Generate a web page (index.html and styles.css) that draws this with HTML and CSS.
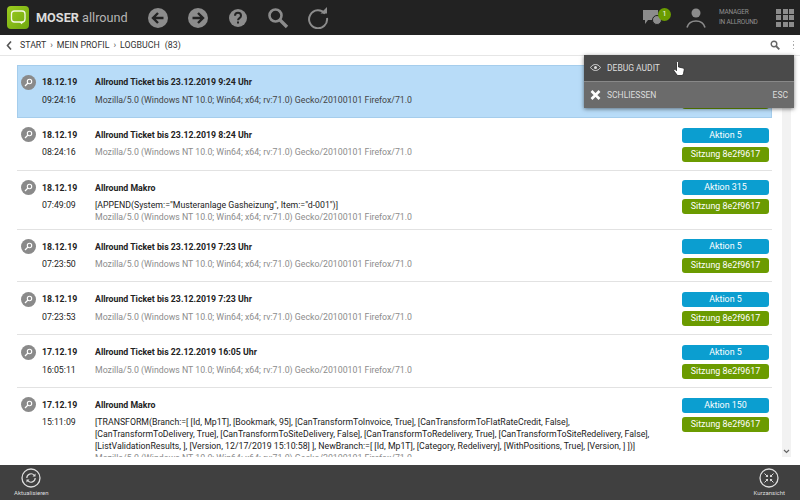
FILE: index.html
```html
<!DOCTYPE html>
<html lang="de">
<head>
<meta charset="utf-8">
<title>Logbuch</title>
<link rel="stylesheet" href="styles.css">
</head>
<body>
<div class="app">
  <header class="topbar">
    <div class="logo"><svg width="22" height="22" viewBox="0 0 22 22"><rect x="4.500" y="5" width="13.500" height="11" rx="3" fill="none" stroke="#f3f8e4" stroke-width="1.300"/><path d="M12.500 16h4l-2 2.200z" fill="#f3f8e4"/></svg></div>
    <div class="brand"><b>MOSER</b> allround</div>
    <nav class="tools">
      <svg width="22" height="22" viewBox="-1 -1 22 22"><circle cx="10" cy="10" r="10" fill="#8c8c8c"/><path d="M15.500 10H5.500M10 5l-5 5 5 5" fill="none" stroke="#222" stroke-width="2.400"/></svg>
      <svg width="22" height="22" viewBox="-1 -1 22 22"><circle cx="10" cy="10" r="10" fill="#8c8c8c"/><path d="M4.500 10h10M10 5l5 5-5 5" fill="none" stroke="#222" stroke-width="2.400"/></svg>
      <svg width="22" height="22" viewBox="-1 -1 22 22"><circle cx="10" cy="10" r="9" fill="#8c8c8c"/><path d="M7 7.800c0-4 6-4 6 0 0 2.400-3 2.200-3 4.400" fill="none" stroke="#222" stroke-width="2"/><rect x="9" y="13.500" width="2" height="2" fill="#222"/></svg>
      <svg width="22" height="22" viewBox="0 0 22 22"><circle cx="8.500" cy="8.500" r="6" fill="none" stroke="#8c8c8c" stroke-width="2.600"/><path d="M13 13l7 7" stroke="#8c8c8c" stroke-width="3.400"/></svg>
      <svg width="22" height="22" viewBox="0 0 22 22"><path d="M18 6.500A9 9 0 1 0 20 11" fill="none" stroke="#8c8c8c" stroke-width="2"/><path d="M13.500 6.500h6.500V0z" fill="#8c8c8c"/></svg>
    </nav>
    <div class="session">
      <div class="chat">
        <svg width="20" height="17" viewBox="0 0 20 17"><path d="M0 1h15v10H5l-3 4v-4H0z" fill="#8c8c8c"/><circle cx="14" cy="11" r="4.500" fill="#8c8c8c" stroke="#222"/></svg>
        <span class="badge">1</span>
      </div>
      <svg class="user" width="20" height="22" viewBox="0 0 20 22"><circle cx="10" cy="6" r="4.500" fill="#8c8c8c"/><path d="M1 20.500c1.500-5 5-6.500 9-6.500s7.500 1.500 9 6.500" fill="none" stroke="#8c8c8c" stroke-width="1.600"/></svg>
      <div class="who"><span>MANAGER</span><span>IN ALLROUND</span></div>
      <div class="grid-icon"><i></i><i></i><i></i><i></i><i></i><i></i><i></i><i></i><i></i></div>
    </div>
  </header>

  <div class="crumbs">
    <svg width="6" height="9" viewBox="0 0 6 9"><path d="M5 .5L1.500 4.500 5 8.500" fill="none" stroke="#555" stroke-width="1.600"/></svg>
    <span>START</span><span class="sep">›</span><span>MEIN PROFIL</span><span class="sep">›</span><span>LOGBUCH</span><span class="count">(83)</span>
    <span class="spacer"></span>
    <svg width="10" height="10" viewBox="0 0 10 10"><circle cx="4" cy="4" r="2.800" fill="none" stroke="#666" stroke-width="1.400"/><path d="M6 6l3.300 3.300" stroke="#666" stroke-width="1.800"/></svg>
    <span class="dots"><i></i><i></i><i></i></span>
  </div>

  <main class="content">
    <div class="list">
      <article class="row selected">
        <span class="mark"><svg width="9" height="9" viewBox="0 0 9 9"><circle cx="5.500" cy="3.500" r="2.200" fill="none" stroke="#fff" stroke-width="1.100"/><path d="M4 5L1 8" stroke="#fff" stroke-width="1.300"/></svg></span>
        <div class="when"><b>18.12.19</b><span>09:24:16</span></div>
        <div class="what"><b>Allround Ticket bis 23.12.2019 9:24 Uhr</b><p class="agent dark">Mozilla/5.0 (Windows NT 10.0; Win64; x64; rv:71.0) Gecko/20100101 Firefox/71.0</p></div>
        <div class="tags"><span class="tag blue">Aktion 5</span><span class="tag green">Sitzung 8e2f9617</span></div>
      </article>
      <article class="row">
        <span class="mark"><svg width="9" height="9" viewBox="0 0 9 9"><circle cx="5.500" cy="3.500" r="2.200" fill="none" stroke="#fff" stroke-width="1.100"/><path d="M4 5L1 8" stroke="#fff" stroke-width="1.300"/></svg></span>
        <div class="when"><b>18.12.19</b><span>08:24:16</span></div>
        <div class="what"><b>Allround Ticket bis 23.12.2019 8:24 Uhr</b><p class="agent">Mozilla/5.0 (Windows NT 10.0; Win64; x64; rv:71.0) Gecko/20100101 Firefox/71.0</p></div>
        <div class="tags"><span class="tag blue">Aktion 5</span><span class="tag green">Sitzung 8e2f9617</span></div>
      </article>
      <article class="row tall">
        <span class="mark"><svg width="9" height="9" viewBox="0 0 9 9"><circle cx="5.500" cy="3.500" r="2.200" fill="none" stroke="#fff" stroke-width="1.100"/><path d="M4 5L1 8" stroke="#fff" stroke-width="1.300"/></svg></span>
        <div class="when"><b>18.12.19</b><span>07:49:09</span></div>
        <div class="what"><b>Allround Makro</b><p>[APPEND(System:="Musteranlage Gasheizung", Item:="d-001")]</p><p class="agent">Mozilla/5.0 (Windows NT 10.0; Win64; x64; rv:71.0) Gecko/20100101 Firefox/71.0</p></div>
        <div class="tags"><span class="tag blue">Aktion 315</span><span class="tag green">Sitzung 8e2f9617</span></div>
      </article>
      <article class="row">
        <span class="mark"><svg width="9" height="9" viewBox="0 0 9 9"><circle cx="5.500" cy="3.500" r="2.200" fill="none" stroke="#fff" stroke-width="1.100"/><path d="M4 5L1 8" stroke="#fff" stroke-width="1.300"/></svg></span>
        <div class="when"><b>18.12.19</b><span>07:23:50</span></div>
        <div class="what"><b>Allround Ticket bis 23.12.2019 7:23 Uhr</b><p class="agent">Mozilla/5.0 (Windows NT 10.0; Win64; x64; rv:71.0) Gecko/20100101 Firefox/71.0</p></div>
        <div class="tags"><span class="tag blue">Aktion 5</span><span class="tag green">Sitzung 8e2f9617</span></div>
      </article>
      <article class="row">
        <span class="mark"><svg width="9" height="9" viewBox="0 0 9 9"><circle cx="5.500" cy="3.500" r="2.200" fill="none" stroke="#fff" stroke-width="1.100"/><path d="M4 5L1 8" stroke="#fff" stroke-width="1.300"/></svg></span>
        <div class="when"><b>18.12.19</b><span>07:23:53</span></div>
        <div class="what"><b>Allround Ticket bis 23.12.2019 7:23 Uhr</b><p class="agent">Mozilla/5.0 (Windows NT 10.0; Win64; x64; rv:71.0) Gecko/20100101 Firefox/71.0</p></div>
        <div class="tags"><span class="tag blue">Aktion 5</span><span class="tag green">Sitzung 8e2f9617</span></div>
      </article>
      <article class="row">
        <span class="mark"><svg width="9" height="9" viewBox="0 0 9 9"><circle cx="5.500" cy="3.500" r="2.200" fill="none" stroke="#fff" stroke-width="1.100"/><path d="M4 5L1 8" stroke="#fff" stroke-width="1.300"/></svg></span>
        <div class="when"><b>17.12.19</b><span>16:05:11</span></div>
        <div class="what"><b>Allround Ticket bis 22.12.2019 16:05 Uhr</b><p class="agent">Mozilla/5.0 (Windows NT 10.0; Win64; x64; rv:71.0) Gecko/20100101 Firefox/71.0</p></div>
        <div class="tags"><span class="tag blue">Aktion 5</span><span class="tag green">Sitzung 8e2f9617</span></div>
      </article>
      <article class="row last">
        <span class="mark"><svg width="9" height="9" viewBox="0 0 9 9"><circle cx="5.500" cy="3.500" r="2.200" fill="none" stroke="#fff" stroke-width="1.100"/><path d="M4 5L1 8" stroke="#fff" stroke-width="1.300"/></svg></span>
        <div class="when"><b>17.12.19</b><span>15:11:09</span></div>
        <div class="what"><b>Allround Makro</b><p>[TRANSFORM(Branch:=[ [Id, Mp1T], [Bookmark, 95], [CanTransformToInvoice, True], [CanTransformToFlatRateCredit, False],<br>[CanTransformToDelivery, True], [CanTransformToSiteDelivery, False], [CanTransformToRedelivery, True], [CanTransformToSiteRedelivery, False],<br>[ListValidationResults, ], [Version, 12/17/2019 15:10:58] ], NewBranch:=[ [Id, Mp1T], [Category, Redelivery], [WithPositions, True], [Version, ] ])]</p><p class="agent">Mozilla/5.0 (Windows NT 10.0; Win64; x64; rv:71.0) Gecko/20100101 Firefox/71.0</p></div>
        <div class="tags"><span class="tag blue">Aktion 150</span><span class="tag green">Sitzung 8e2f9617</span></div>
      </article>
    </div>
    <div class="scrolltrack">
      <svg width="7" height="5" viewBox="0 0 7 5"><path d="M1 1l2.500 2.500L6 1" fill="none" stroke="#666" stroke-width="1.200"/></svg>
    </div>
  </main>

  <footer class="bottombar">
    <div class="action">
      <svg width="20" height="20" viewBox="0 0 20 20"><circle cx="10" cy="10" r="9" fill="none" stroke="#ddd" stroke-width="1.300"/><path d="M5.800 10a4.200 4.200 0 0 1 7.400-2.700M14.200 10a4.200 4.200 0 0 1-7.400 2.700" fill="none" stroke="#ddd" stroke-width="1.200"/><path d="M14.500 5.500v3h-3zM5.500 14.500v-3h3z" fill="#ddd"/></svg>
      <span>Aktualisieren</span>
    </div>
    <div class="action">
      <svg width="20" height="20" viewBox="0 0 20 20"><circle cx="10" cy="10" r="9" fill="none" stroke="#ddd" stroke-width="1.300"/><path d="M5.500 5.500L8.500 8.500M14.500 5.500L11.500 8.500M5.500 14.500L8.500 11.500M14.500 14.500L11.500 11.500" stroke="#ddd" stroke-width="1"/><path d="M9 9H6.500L9 6.500zM11 9h2.500L11 6.500zM9 11H6.500L9 13.500zM11 11h2.500L11 13.500z" fill="#ddd"/></svg>
      <span>Kurzansicht</span>
    </div>
  </footer>

  <div class="menu">
    <div class="menu-item first">
      <svg width="11" height="7" viewBox="0 0 11 7"><path d="M.5 3.500C2 1.300 3.700.5 5.500.5s3.500.8 5 3c-1.500 2.200-3.200 3-5 3s-3.500-.8-5-3z" fill="none" stroke="#ddd" stroke-width=".9"/><circle cx="5.500" cy="3.500" r="1.500" fill="#ddd"/></svg>
      <span>DEBUG AUDIT</span>
      <svg class="cursor" width="12" height="15" viewBox="0 0 12 15"><path d="M3.500 1.500c0-1.300 2-1.300 2 0V6l4.500 1c1 .3 1.300 1 1.200 2l-.7 3.500-1 2H4.500L1 10c-.8-1 .5-2.300 1.500-1.300l1 1z" fill="#fff" stroke="#222" stroke-width=".8"/></svg>
    </div>
    <div class="menu-item second">
      <svg width="10" height="10" viewBox="0 0 10 10"><path d="M1 1l8 8M9 1l-8 8" stroke="#fff" stroke-width="2.600"/></svg>
      <span>SCHLIESSEN</span>
      <span class="esc">ESC</span>
    </div>
  </div>
</div>
</body>
</html>
```

FILE: styles.css
```css
* { box-sizing: border-box; }
html, body { margin: 0; padding: 0; }
body { font-family: Roboto, "Liberation Sans", sans-serif; color: #222; background: #fff; }
.app { position: relative; width: 800px; height: 500px; display: flex; flex-direction: column; overflow: hidden; }

.topbar { height: 35px; flex: none; background: #222; display: flex; align-items: center; padding-left: 7px; }
.logo { width: 22px; height: 23px; border-radius: 4px; background: linear-gradient(135deg, #9ccc1f, #6fa80f); }
.brand { margin-left: 7px; font-size: 12.700px; color: #b5b5b5; width: 110.500px; white-space: nowrap; }
.brand b { color: #dcdcdc; }
.tools { display: flex; align-items: center; gap: 18px; }
.session { margin-left: auto; display: flex; align-items: center; padding-right: 6px; }
.chat { position: relative; width: 28px; height: 18px; }
.badge { position: absolute; left: 15px; top: -1px; width: 13px; height: 13px; border-radius: 50%; background: #6a9c00; color: #fff; font-size: 7px; text-align: center; line-height: 13px; }
.user { margin-left: 15px; }
.who { margin-left: 13px; width: 57px; display: flex; flex-direction: column; gap: 3px; font-size: 6.500px; letter-spacing: -.2px; line-height: 7px; color: #8f8f8f; }
.grid-icon { width: 18px; height: 18px; display: grid; grid-template-columns: repeat(3, 5px); grid-auto-rows: 5px; gap: 1.500px; }
.grid-icon i { background: #8c8c8c; }

.crumbs { height: 20px; flex: none; display: flex; align-items: center; padding: 0 6px; background: #fff; font-size: 8.800px; color: #333; }
.crumbs svg:first-child { margin-right: 8px; }
.sep { margin: 0 4px; color: #555; }
.count { margin-left: 5px; }
.spacer { flex: 1; }
.dots { margin-left: 13px; display: flex; flex-direction: column; gap: 2px; }
.dots i { width: 1.500px; height: 1.500px; background: #aaa; }

.content { position: relative; flex: 1; min-height: 0; overflow: hidden; background: #fff; border-top: 1px solid #e6e6e6; padding: 9px 0 8px 17px; display: flex; }
.list { width: 755px; flex: none; overflow: hidden; }
.row { display: flex; padding: 12px 3px 0 4px; height: 52.750px; border-bottom: 1px solid #e2e2e2; font-size: 8.750px; }
.row.tall { height: 59px; }
.row.last { height: auto; border-bottom: 0; }
.row.selected { background: #b8dcf8; border: 1px solid #a5cdec; padding: 11px 2px 0 3px; }
.mark { width: 15px; height: 15px; border-radius: 50%; background: #8a8a8a; display: flex; align-items: center; justify-content: center; flex: none; margin-right: 6px; margin-top: -2.500px; }
.when { width: 53px; flex: none; display: flex; flex-direction: column; gap: 7.500px; line-height: 10px; }
.when b { font-weight: 700; }
.what { flex: 1; min-width: 0; line-height: 12px; white-space: nowrap; }
.what b { display: block; line-height: 10px; margin-bottom: 6.500px; }
.what p { margin: 0; }
.agent { color: #8c8c8c; }
.agent.dark { color: #444; }
.tags { width: 87px; flex: none; display: flex; flex-direction: column; gap: 4px; margin-top: -2.250px; }
.tag { height: 15px; border-radius: 3px; color: #fff; font-size: 8.900px; line-height: 15px; text-align: center; }
.blue { background: #0b9ed0; }
.green { background: #6b9b00; }

.scrolltrack { margin-left: 10px; width: 9px; margin-top: -9px; background: #f2f2f2; display: flex; align-items: flex-end; justify-content: center; padding-bottom: 3px; }

.bottombar { height: 35px; flex: none; background: #404040; display: flex; justify-content: space-between; padding: 3px 15px 0 14px; }
.action { display: flex; flex-direction: column; align-items: center; font-size: 6px; color: #ddd; gap: 1px; }

.menu { position: absolute; left: 584px; top: 55px; width: 210px; box-shadow: 0 1px 4px rgba(0,0,0,.5); color: #ddd; font-size: 8.500px; }
.menu-item { height: 26.500px; display: flex; align-items: center; padding: 0 6px; }
.menu-item > svg:first-child { margin-right: 6px; width: 11px; }
.first { background: #4a4a4a; border-bottom: 1px solid #888; position: relative; }
.second { background: #6b6b6b; }
.cursor { position: absolute; left: 89px; top: 6px; }
.esc { margin-left: auto; }
```
